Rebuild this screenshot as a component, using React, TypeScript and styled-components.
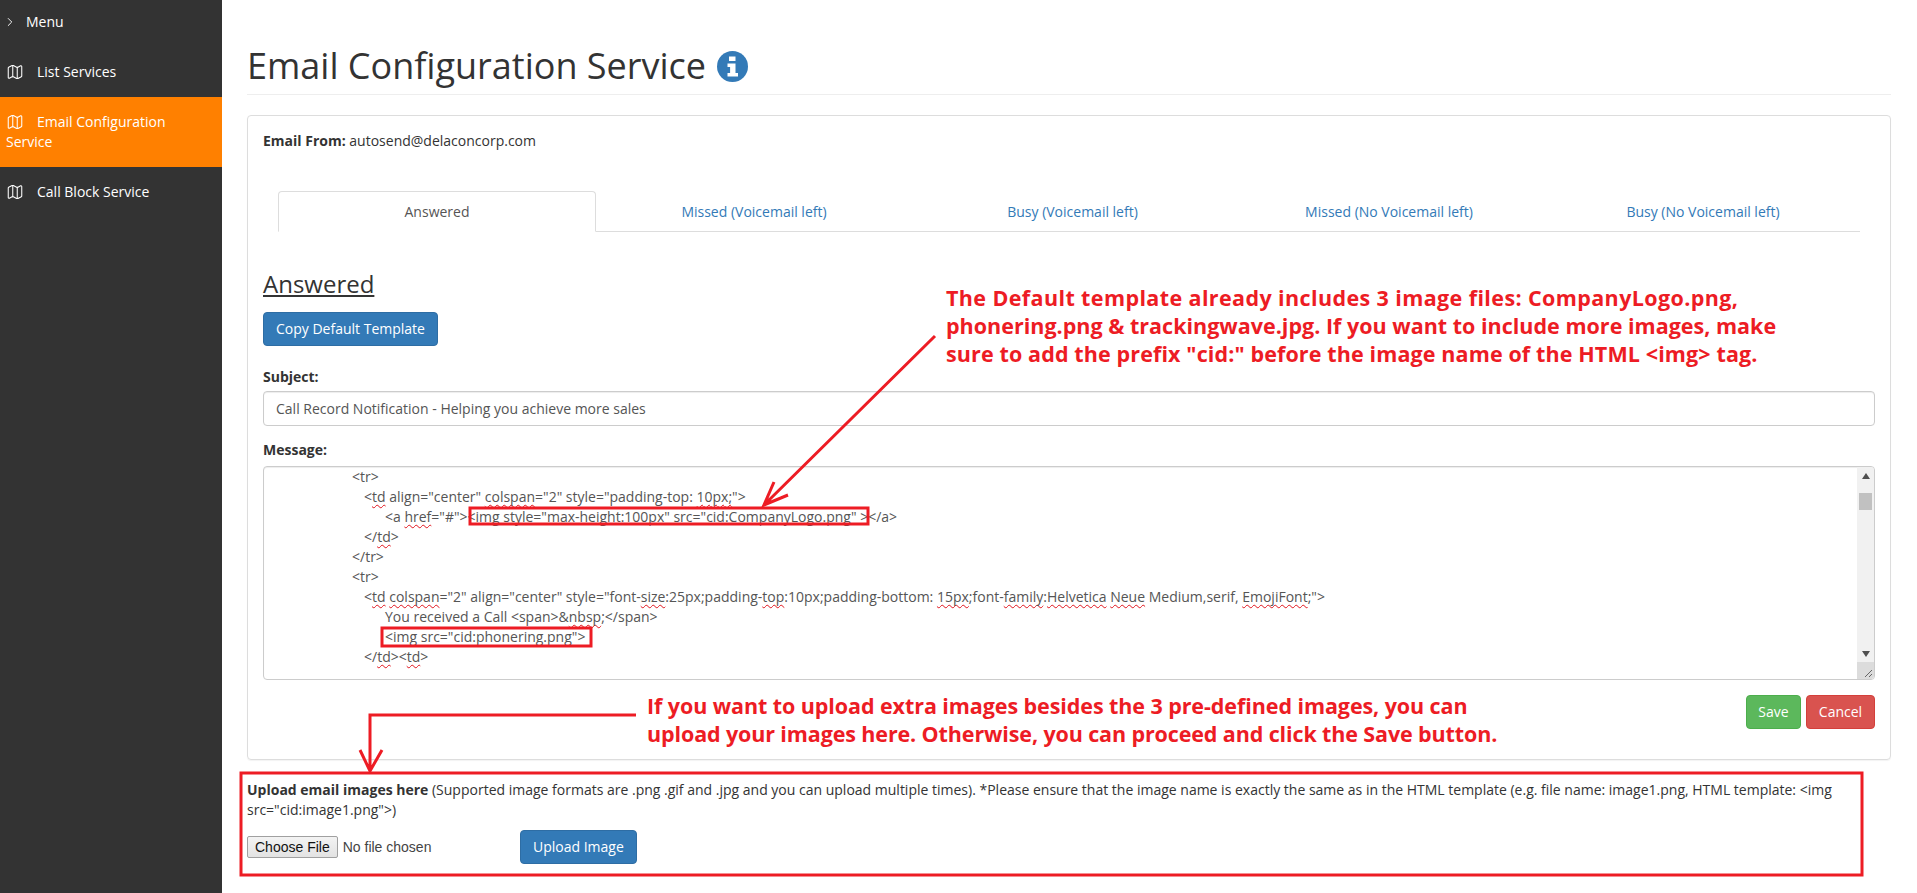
import React from 'react';
import styled, { createGlobalStyle } from 'styled-components';
import { ChevronRight, Map as MapIcon } from 'lucide-react';

const Global = createGlobalStyle`
  html, body { margin: 0; padding: 0; background: #fff; }
  body { font-family: "Open Sans", "Liberation Sans", sans-serif; font-size: 14px; line-height: 20px; color: #333; }
  * { box-sizing: border-box; }
`;

const Page = styled.div`
  position: relative;
  display: flex;
  width: 1917px;
  height: 893px;
  overflow: hidden;
`;

const Sidebar = styled.nav`
  flex: 0 0 222px;
  background: #333;
  color: #fff;
  display: flex;
  flex-direction: column;
`;

const MenuToggle = styled.div`
  display: flex;
  align-items: center;
  height: 47px;
  padding: 0 0 3px 3px;
  gap: 9px;
  svg { width: 14px; height: 14px; }
`;

const NavItem = styled.div<{ $active?: boolean }>`
  padding: 15px 40px 15px 6px;
  background: ${(p) => (p.$active ? '#ff8000' : 'transparent')};
  svg { width: 18px; height: 18px; margin-right: 13px; vertical-align: -4px; }
`;

const Main = styled.main`
  flex: 1;
  padding: 0 26px 0 25px;
  min-width: 0;
`;

const Header = styled.header`
  height: 95px;
  padding-top: 46px;
  border-bottom: 1px solid #eee;
  display: flex;
  align-items: flex-start;
`;

const Title = styled.h1`
  margin: 0;
  font-size: 36px;
  line-height: 40px;
  font-weight: 400;
  color: #333;
  display: flex;
  align-items: center;
  gap: 11px;
  svg { width: 31px; height: 31px; }
`;

const Panel = styled.section`
  margin-top: 20px;
  border: 1px solid #ddd;
  border-radius: 4px;
  box-shadow: 0 1px 1px rgba(0, 0, 0, 0.05);
  padding: 15px 15px 30px;
`;

const Tabs = styled.div`
  margin: 40px 15px 0;
  display: grid;
  grid-template-columns: 318px 316px 321px 312px 316px;
  border-bottom: 1px solid #ddd;
  height: 41px;
`;

const Tab = styled.div<{ $active?: boolean }>`
  height: 41px;
  display: flex;
  align-items: center;
  justify-content: center;
  border-radius: 4px 4px 0 0;
  border: 1px solid ${(p) => (p.$active ? '#ddd' : 'transparent')};
  border-bottom-color: ${(p) => (p.$active ? '#fff' : 'transparent')};
  color: ${(p) => (p.$active ? '#555' : '#337ab7')};
`;

const Heading = styled.h3`
  margin: 39px 0 0;
  font-size: 24px;
  line-height: 26px;
  font-weight: 400;
  text-decoration: underline;
`;

const Button = styled.button<{ $bg: string; $border: string; $width?: number }>`
  font: inherit;
  color: #fff;
  height: 34px;
  padding: 6px ${(p) => (p.$width ? 0 : 12)}px;
  width: ${(p) => (p.$width ? `${p.$width}px` : 'auto')};
  background: ${(p) => p.$bg};
  border: 1px solid ${(p) => p.$border};
  border-radius: 4px;
`;

const CopyRow = styled.div`
  margin-top: 15px;
  display: flex;
`;

const Label = styled.div<{ $top: number }>`
  margin-top: ${(p) => p.$top}px;
  font-weight: 700;
`;

const Input = styled.div`
  margin-top: 4px;
  height: 35px;
  padding: 7px 12px;
  border: 1px solid #ccc;
  border-radius: 4px;
  color: #555;
  box-shadow: inset 0 1px 1px rgba(0, 0, 0, 0.075);
`;

const Editor = styled.div`
  margin-top: 6px;
  height: 214px;
  border: 1px solid #ccc;
  border-radius: 4px;
  box-shadow: inset 0 1px 1px rgba(0, 0, 0, 0.075);
  display: flex;
  overflow: hidden;
`;

const Code = styled.div`
  flex: 1;
  padding: 0 12px;
  color: #555;
  overflow: hidden;
`;

const CodeLine = styled.div<{ $indent: number }>`
  padding-left: ${(p) => p.$indent}px;
  height: 20px;
  white-space: pre;
`;

const Sq = styled.span`
  text-decoration: underline wavy #e0141c 1px;
  text-underline-offset: 2px;
  text-decoration-skip-ink: none;
`;

const ScrollBar = styled.div`
  flex: 0 0 17px;
  background: #f1f1f1;
  display: flex;
  flex-direction: column;
  align-items: center;
`;

const ArrowCell = styled.div`
  height: 17px;
  flex: 0 0 17px;
  width: 17px;
  display: flex;
  align-items: center;
  justify-content: center;
  svg { width: 8px; height: 6px; fill: #505050; }
`;

const Thumb = styled.div`
  margin-top: 9px;
  width: 13px;
  height: 17px;
  background: #c1c1c1;
`;

const Spacer = styled.div`
  flex: 1;
`;

const Corner = styled.div`
  flex: 0 0 17px;
  width: 17px;
  background: #dcdcdc;
  svg { display: block; width: 17px; height: 17px; }
`;

const Actions = styled.div`
  margin-top: 15px;
  display: flex;
  justify-content: flex-end;
  gap: 5px;
`;

const Upload = styled.section`
  margin-top: 20px;
`;

const UploadRow = styled.div`
  margin-top: 10px;
  display: flex;
  align-items: center;
`;

const FileInput = styled.input`
  width: 273px;
  font: 14px "Liberation Sans", Arial, sans-serif;
  color: #444;
  &::file-selector-button {
    font: inherit;
    height: 22px;
    line-height: 18px;
    padding: 1px 7px;
    margin-right: 5px;
    color: #111;
    background: linear-gradient(#f3f3f3, #e3e3e3);
    border: 1px solid #a0a0a0;
    border-radius: 2px;
  }
`;

const Overlay = styled.svg`
  position: absolute;
  inset: 0;
  width: 1917px;
  height: 893px;
  pointer-events: none;
  fill: none;
  stroke: #ed1c24;
`;

const Note = styled.div<{ $left: number; $top: number }>`
  position: absolute;
  left: ${(p) => p.$left}px;
  top: ${(p) => p.$top}px;
  color: #ed1c24;
  font-size: 21.5px;
  line-height: 28px;
  font-weight: 700;
  white-space: nowrap;
`;

const NoteLine = styled.div<{ $spacing: number }>`
  letter-spacing: ${(p) => p.$spacing}px;
`;

const navItems = ['List Services', 'Email Configuration Service', 'Call Block Service'];
const tabs = ['Answered', 'Missed (Voicemail left)', 'Busy (Voicemail left)', 'Missed (No Voicemail left)', 'Busy (No Voicemail left)'];

export default function App() {
  return (
    <Page>
      <Global />
      <Sidebar>
        <MenuToggle><ChevronRight strokeWidth={1.6} /> Menu</MenuToggle>
        {navItems.map((n, i) => (
          <NavItem key={n} $active={i === 1}><MapIcon strokeWidth={1.4} />{n}</NavItem>
        ))}
      </Sidebar>
      <Main>
        <Header>
          <Title>
            Email Configuration Service
            <svg viewBox="0 0 31 31">
              <circle cx="15.5" cy="15.5" r="15.5" fill="#337ab7" />
              <path d="M12 5.5h6.5v4.5H12zM10.5 12.5h8v9.5H21v3.5H10.5V22h2.6v-6h-2.6z" fill="#fff" />
            </svg>
          </Title>
        </Header>
        <Panel>
          <div><b>Email From:</b> autosend@delaconcorp.com</div>
          <Tabs>
            {tabs.map((t, i) => <Tab key={t} $active={i === 0}>{t}</Tab>)}
          </Tabs>
          <Heading>Answered</Heading>
          <CopyRow><Button $bg="#337ab7" $border="#2e6da4">Copy Default Template</Button></CopyRow>
          <Label $top={21}>Subject:</Label>
          <Input>Call Record Notification - Helping you achieve more sales</Input>
          <Label $top={14}>Message:</Label>
          <Editor>
            <Code>
              <CodeLine $indent={76}>{'<tr>'}</CodeLine>
              <CodeLine $indent={88}>{'<'}<Sq>td</Sq>{' align="center" '}<Sq>colspan</Sq>{'="2" style="padding-top: '}<Sq>10px;</Sq>{'">'}</CodeLine>
              <CodeLine $indent={109}>{'<a '}<Sq>href</Sq>{'="#"><img style="max-height:100px" src="cid:CompanyLogo.png" ></a>'}</CodeLine>
              <CodeLine $indent={88}>{'</'}<Sq>td</Sq>{'>'}</CodeLine>
              <CodeLine $indent={76}>{'</tr>'}</CodeLine>
              <CodeLine $indent={76}>{'<tr>'}</CodeLine>
              <CodeLine $indent={88}>{'<'}<Sq>td</Sq>{' '}<Sq>colspan</Sq>{'="2" align="center" style="font-'}<Sq>size</Sq>{':25px;padding-'}<Sq>top</Sq>{':10px;padding-bottom: '}<Sq>15px</Sq>{';font-'}<Sq>family</Sq>{':'}<Sq>Helvetica</Sq>{' '}<Sq>Neue</Sq>{' Medium,serif, '}<Sq>EmojiFont</Sq>{';">'}</CodeLine>
              <CodeLine $indent={109}>{'You received a Call <span>&'}<Sq>nbsp</Sq>{';</span>'}</CodeLine>
              <CodeLine $indent={109}>{'<img src="cid:phonering.png">'}</CodeLine>
              <CodeLine $indent={88}>{'</'}<Sq>td</Sq>{'><'}<Sq>td</Sq>{'>'}</CodeLine>
            </Code>
            <ScrollBar>
              <ArrowCell><svg viewBox="0 0 8 6"><path d="M4 0 8 6H0z" /></svg></ArrowCell>
              <Thumb />
              <Spacer />
              <ArrowCell><svg viewBox="0 0 8 6"><path d="M0 0h8L4 6z" /></svg></ArrowCell>
              <Corner>
                <svg viewBox="0 0 17 17"><path d="M15 8 8 15M15 12l-3 3" stroke="#666" fill="none" /></svg>
              </Corner>
            </ScrollBar>
          </Editor>
          <Actions>
            <Button $bg="#5cb85c" $border="#4cae4c" $width={55}>Save</Button>
            <Button $bg="#d9534f" $border="#d43f3a" $width={69}>Cancel</Button>
          </Actions>
        </Panel>
        <Upload>
          <div>
            <b>Upload email images here</b> (Supported image formats are .png .gif and .jpg and you can upload multiple times). *Please ensure that the image name is exactly the same as in the HTML template (e.g. file name: image1.png, HTML template: &lt;img src="cid:image1.png"&gt;)
          </div>
          <UploadRow>
            <FileInput type="file" />
            <Button $bg="#337ab7" $border="#2e6da4">Upload Image</Button>
          </UploadRow>
        </Upload>
      </Main>
      <Overlay viewBox="0 0 1917 893">
        <rect x="470" y="508" width="398" height="16" strokeWidth="3" />
        <rect x="382" y="628" width="209" height="18" strokeWidth="3" />
        <rect x="241" y="773" width="1621" height="102" strokeWidth="3" />
        <path d="M935 336 764 505M774 482l-10 23 24-10" strokeWidth="3" />
        <path d="M636 715H370v55M360 750l10 21 12-21" strokeWidth="3" />
      </Overlay>
      <Note $left={946} $top={284}>
        <NoteLine $spacing={0.39}>The Default template already includes 3 image files: CompanyLogo.png,</NoteLine>
        <NoteLine $spacing={0.01}>phonering.png &amp; trackingwave.jpg. If you want to include more images, make</NoteLine>
        <NoteLine $spacing={0.12}>sure to add the prefix "cid:" before the image name of the HTML &lt;img&gt; tag.</NoteLine>
      </Note>
      <Note $left={647} $top={692}>
        <NoteLine $spacing={-0.08}>If you want to upload extra images besides the 3 pre-defined images, you can</NoteLine>
        <NoteLine $spacing={-0.12}>upload your images here. Otherwise, you can proceed and click the Save button.</NoteLine>
      </Note>
    </Page>
  );
}
